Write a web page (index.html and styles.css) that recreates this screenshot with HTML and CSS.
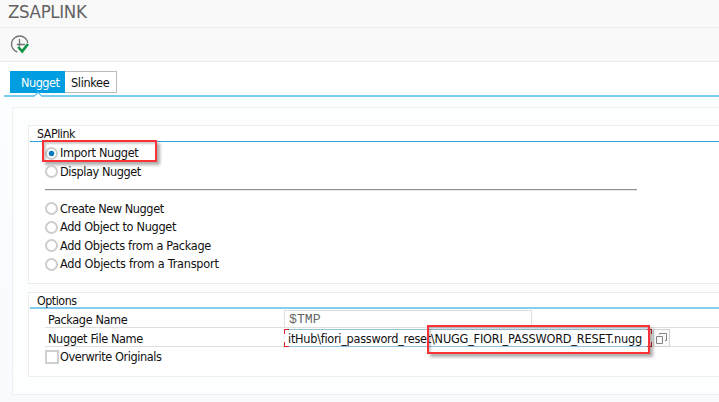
FILE: index.html
```html
<!DOCTYPE html>
<html lang="en">
<head>
<meta charset="utf-8">
<title>ZSAPLINK</title>
<link rel="stylesheet" href="styles.css">
</head>
<body>
<main class="window">
  <header class="title"><h1>ZSAPLINK</h1></header>
  <div class="toolbar">
    <svg class="execute" width="20" height="20" viewBox="0 0 20 20" fill="none">
      <path d="M7.2 18A8.2 8.2 0 1 1 17.8 9" stroke="#737373" stroke-width="1.4"/>
      <path d="M9.5 5v5.5H15M6.8 10.5h2.7v2" stroke="#737373" stroke-width="1.3"/>
      <path d="M8.2 13l4 4.4 5.8-7.4" stroke="#109344" stroke-width="2.6"/>
    </svg>
  </div>
  <nav class="tabs">
    <span class="tab active">Nugget</span><span class="tab">Slinkee</span>
  </nav>
  <div class="content">
    <section class="group link">
      <h2>SAPlink</h2>
      <div class="body">
        <label class="option"><i class="radio checked"></i><span>Import Nugget</span><b class="mark mark-import"></b></label>
        <label class="option"><i class="radio"></i><span class="tight">Display Nugget</span></label>
        <div class="rule"></div>
        <label class="option"><i class="radio"></i><span class="tight">Create New Nugget</span></label>
        <label class="option"><i class="radio"></i><span>Add Object to Nugget</span></label>
        <label class="option"><i class="radio"></i><span>Add Objects from a Package</span></label>
        <label class="option"><i class="radio"></i><span class="loose">Add Objects from a Transport</span></label>
      </div>
    </section>
    <section class="group options">
      <h2>Options</h2>
      <div class="body">
        <div class="field"><span class="label">Package Name</span><span class="input package">$TMP</span></div>
        <div class="field"><span class="label">Nugget File Name</span><span class="input file"><i class="corners"></i><span class="path">itHub\fiori_password_reset</span><span class="name">\NUGG_FIORI_PASSWORD_RESET.nugg</span><b class="mark mark-file"></b></span><span class="picker"><svg width="13" height="13" viewBox="0 0 13 13" fill="none" stroke="#858585"><path d="M1.5 4.5h6v7h-6zM4.5 2.5v-1h7v7H10"/></svg></span></div>
        <label class="option check"><i class="checkbox"></i><span class="tight">Overwrite Originals</span></label>
      </div>
    </section>
  </div>
</main>
</body>
</html>
```

FILE: styles.css
```css
* { box-sizing: border-box; }
body {
  margin: 0;
  width: 719px;
  height: 402px;
  overflow: hidden;
  background: #fff;
  color: #111;
  font: 12.6px/18px "DejaVu Sans Condensed", "DejaVu Sans", sans-serif;
  font-stretch: condensed;
}
.window {
  width: 719px;
  height: 402px;
  overflow: hidden;
  background: linear-gradient(#fff 97px, #fbfdfe 98px, #f8fbfe);
}
h1, h2 { margin: 0; font-weight: normal; }
.title {
  height: 28px;
  padding-left: 8px;
  background: #f9f9f9;
  border-bottom: 1px solid #ebebeb;
}
.title h1 { font-size: 18.5px; line-height: 24px; color: #626262; letter-spacing: -.35px; }
.toolbar {
  height: 34px;
  padding: 6px 0 0 10px;
  background: #f9f9f9;
  border-bottom: 1px solid #e9e9e9;
}
.execute { display: block; }
.tabs {
  position: relative;
  display: flex;
  height: 35px;
  margin-left: 4px;
  padding: 9px 0 0 6px;
  background: #fff;
  border-bottom: 2px solid #7bcbf0;
}
.tabs::after {
  content: "";
  position: absolute;
  left: 31px;
  top: 23px;
  width: 5px;
  height: 5px;
  margin-top: 8px;
  background: #fff;
  border: solid #49b9e9;
  border-width: 1px 0 0 1px;
  transform: rotate(45deg);
}
.tab {
  width: 52px;
  height: 22px;
  padding-left: 6px;
  line-height: 21px;
  letter-spacing: -.35px;
  background: #fff;
  border: 1px solid #bcbcbc;
  border-left: 0;
}
.tab.active { width: 55px; padding-left: 11px; letter-spacing: -.5px; color: #fff; background: #009de0; border-color: #009de0; }
.content {
  height: 288px;
  margin: 10px 0 0 12px;
  padding: 17px 0 0 15px;
  background: #fdfefe;
  border: solid #edf1f2;
  border-width: 1px 0 1px 1px;
}
.group { background: #fff; border: solid #ededed; border-width: 1px 0 1px 1px; }
.link { height: 159px; }
.options { height: 85px; margin-top: 8px; }
.group h2 {
  height: 16px;
  margin-left: 1px;
  padding-left: 7px;
  font-size: 12.3px;
  line-height: 16px;
  letter-spacing: -.45px;
  border-bottom: 1px solid #2da5dc;
}
.options h2 { border-bottom: 2px solid #82ccef; }
.body { padding-left: 16px; }
.link .body { padding-top: 2px; }
.option { position: relative; display: flex; align-items: center; height: 18.5px; letter-spacing: -.32px; }
.tight { letter-spacing: -.43px; }
.loose { letter-spacing: -.24px; }
.radio {
  flex: none;
  width: 13px;
  height: 13px;
  margin-right: 2px;
  border: 2px solid #cdcdcd;
  border-radius: 50%;
  background: #fff;
}
.radio.checked { background: radial-gradient(circle, #087ac0 2.4px, #fff 3.2px); }
.rule { width: 592px; height: 2px; margin: 8px 0 8.6px; background: #8d8f91; border-bottom: 1px solid #e8e8e8; }
.field { display: flex; height: 19px; border-bottom: 1px solid #e0e0e0; }
.label { width: 239px; padding-left: 3px; line-height: 21px; letter-spacing: -.38px; }
.input { position: relative; flex: none; height: 18px; white-space: pre; }
.package {
  width: 248px;
  height: 17px;
  margin-top: 1px;
  padding-left: 4px;
  font: 13.2px/18px "Liberation Mono", monospace;
  color: #666;
  border: 1px solid #dedede;
  border-bottom: 0;
}
.file {
  display: flex;
  width: 368px;
  height: 18px;
  margin-top: 1px;
  padding-left: 4px;
  line-height: 17px;
  background: #fff;
  border: solid #91c3df;
  border-width: 1px 0;
}
.corners {
  position: absolute;
  inset: -1px 0;
  background:
    linear-gradient(#d6242b, #d6242b) 0 0 / 5px 1px,
    linear-gradient(#d6242b, #d6242b) 0 0 / 1px 5px,
    linear-gradient(#d6242b, #d6242b) 100% 0 / 5px 1px,
    linear-gradient(#d6242b, #d6242b) 100% 0 / 1px 5px,
    linear-gradient(#d6242b, #d6242b) 0 100% / 5px 1px,
    linear-gradient(#d6242b, #d6242b) 0 100% / 1px 5px,
    linear-gradient(#d6242b, #d6242b) 100% 100% / 5px 1px,
    linear-gradient(#d6242b, #d6242b) 100% 100% / 1px 5px;
  background-repeat: no-repeat;
}
.path { width: 143px; letter-spacing: -.27px; }
.name { letter-spacing: -.2px; }
.picker {
  display: grid;
  place-items: center;
  width: 17px;
  height: 18px;
  margin: 1px 0 0 1px;
  background: #fafafa;
  border: 1px solid #d2d2d2;
}
.check { height: 18px; margin-top: 1px; }
.checkbox { flex: none; width: 14px; height: 14px; margin-right: 1px; border: 2px solid #cfcfcf; background: #fff; }
.mark { position: absolute; border: 2px solid #fa3237; box-shadow: 3px 3px 3px rgba(0, 0, 0, .32), inset 2px 2px 2px rgba(0, 0, 0, .2); }
.mark-import { left: -3px; top: -4px; width: 115px; height: 22px; }
.mark-file { left: 143px; top: -5px; width: 223px; height: 29px; }
```
